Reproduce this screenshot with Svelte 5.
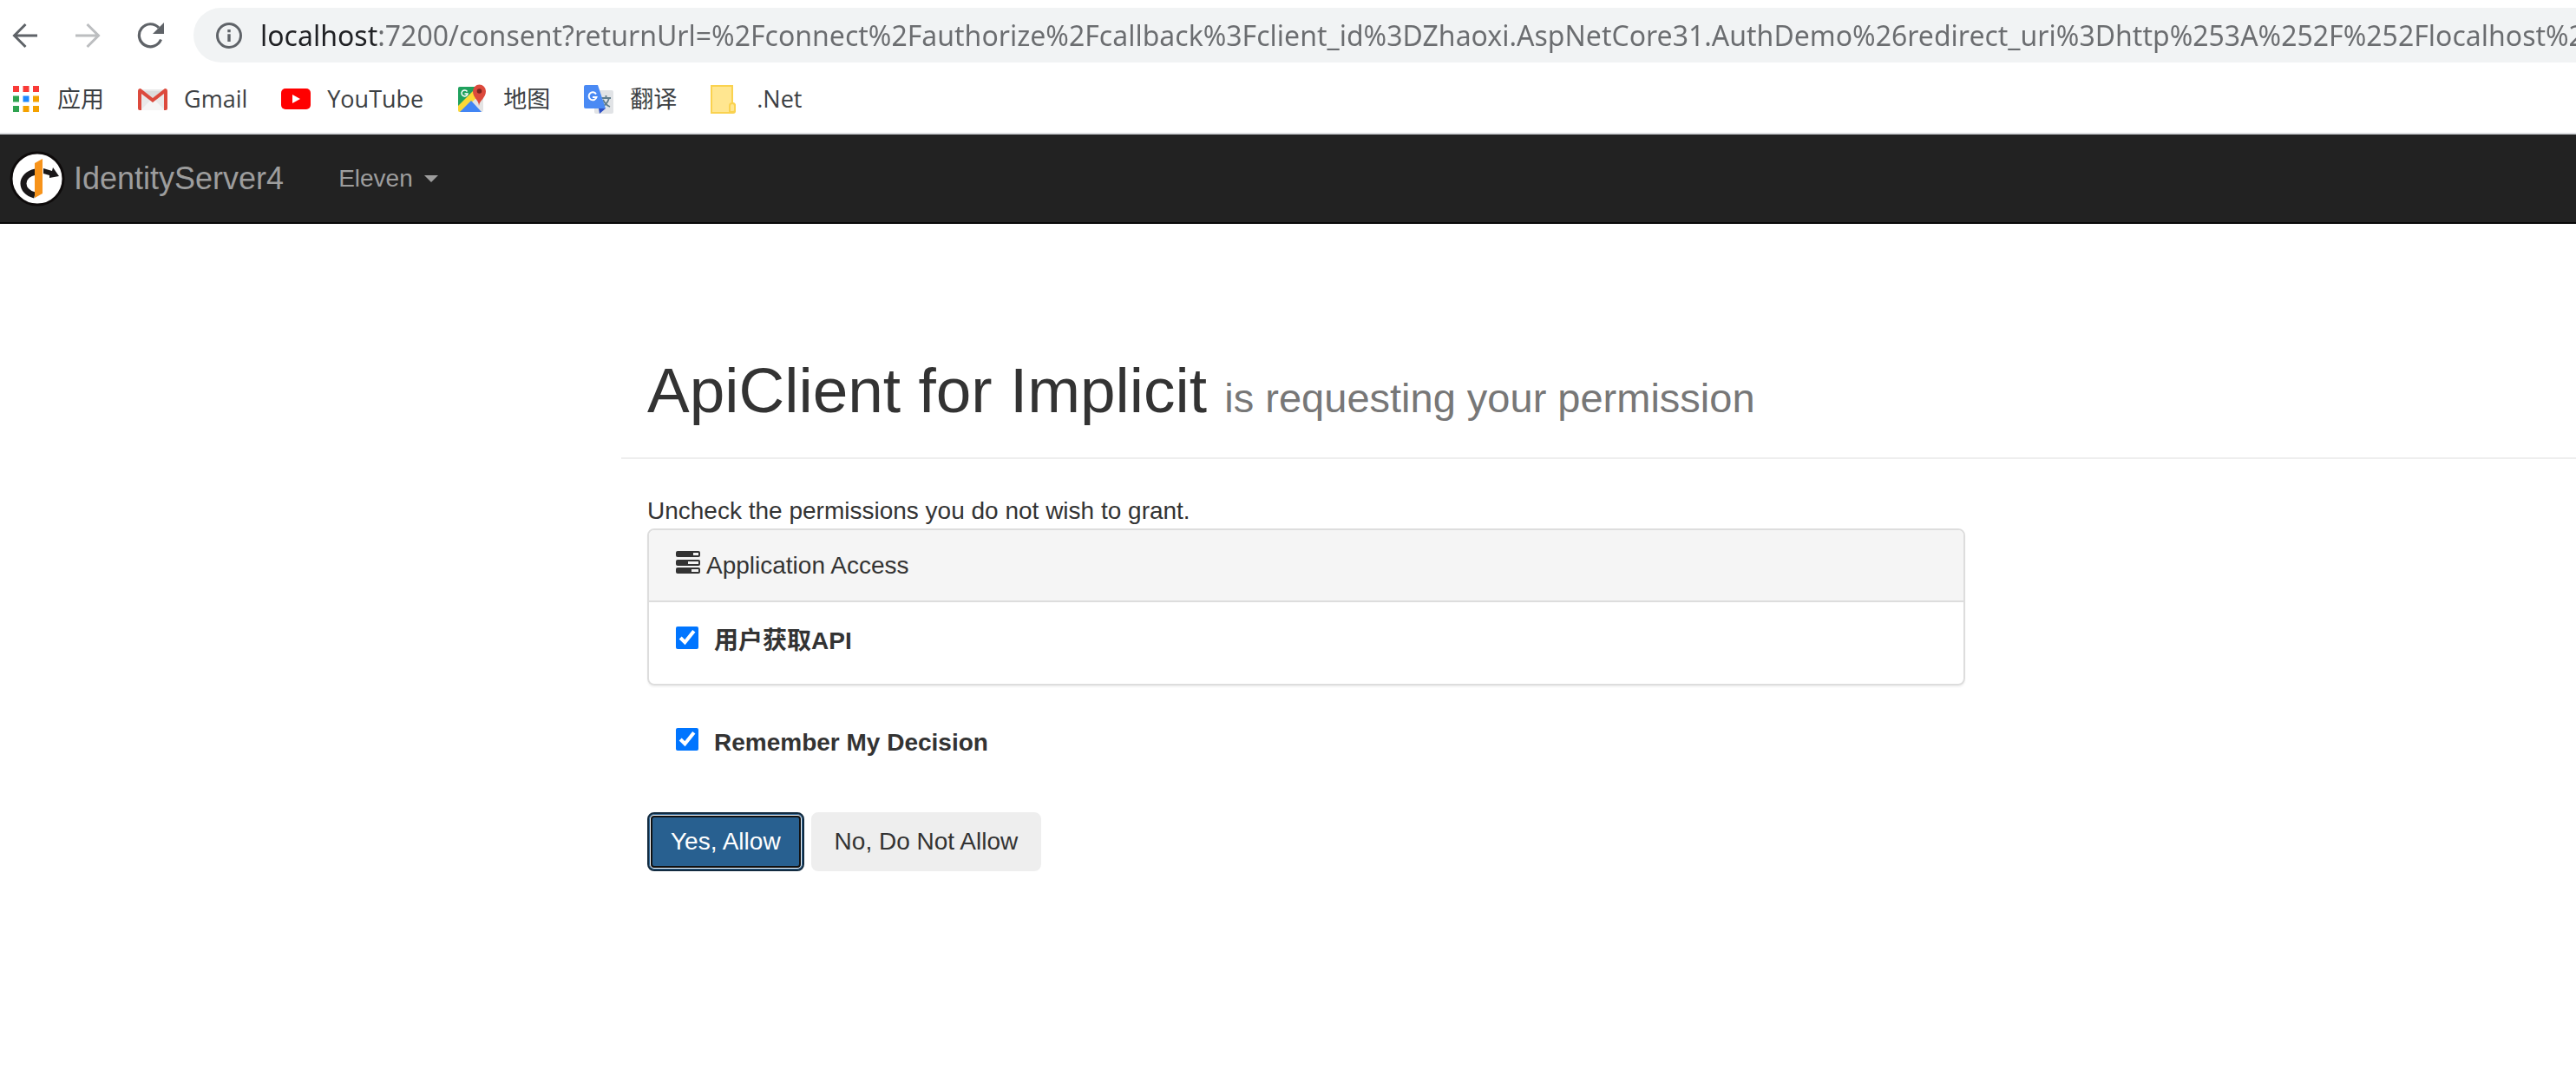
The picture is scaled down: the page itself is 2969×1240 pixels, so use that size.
<script>
  const host = 'localhost';
  const rest =
    ':7200/consent?returnUrl=%2Fconnect%2Fauthorize%2Fcallback%3Fclient_id%3DZhaoxi.AspNetCore31.AuthDemo%26redirect_uri%3Dhttp%253A%252F%252Flocalhost%253A7200';
  let address = $state(host + rest);
  let scope = $state(true);
  let remember = $state(true);
  const dots = ['#f93a37', '#f93a37', '#f93a37', '#2fa350', '#1e88ff', '#f4a100', '#2fa350', '#f4a100', '#f4a100'];
</script>

<div class="browser">
  <div class="toolbar">
    <button class="tool" aria-label="Back">
      <svg width="30" height="30" viewBox="0 0 30 30" fill="none" stroke="#5f6368" stroke-width="3"><path d="M29 15H3M15.500 2L2.500 15l13 13" /></svg>
    </button>
    <button class="tool" aria-label="Forward" disabled>
      <svg width="30" height="30" viewBox="0 0 30 30" fill="none" stroke="#bcbec0" stroke-width="3"><path d="M1 15h26M14.500 2l13 13-13 13" /></svg>
    </button>
    <button class="tool" aria-label="Reload">
      <svg width="32" height="30" viewBox="0 0 32 30"><path d="M27.500 19.500A13 13 0 1 1 25 6" fill="none" stroke="#5f6368" stroke-width="3.200" /><path d="M31 0v13H18z" fill="#5f6368" /></svg>
    </button>
    <div class="omnibox">
      <svg width="32" height="32" viewBox="0 0 32 32"><circle cx="16" cy="16" r="13.500" fill="none" stroke="#5f6368" stroke-width="3" /><path d="M14.300 9h3.400v3.200h-3.400zM14.300 14.300h3.400V23h-3.400z" fill="#5f6368" /></svg>
      <input class="address" type="text" aria-label="Address" spellcheck="false" bind:value={address} />
    </div>
  </div>

  <nav class="bookmarks" aria-label="Bookmarks">
    <a href="#apps">
      <svg width="34" height="34" viewBox="0 0 34 34">
        {#each dots as c, i}
          <rect x={2 + (i % 3) * 11.500} y={2 + Math.floor(i / 3) * 11.500} width="7" height="7" fill={c} />
        {/each}
      </svg>应用</a>
    <a href="#gmail">
      <svg width="34" height="34" viewBox="0 0 34 34"><rect x="2" y="6" width="30" height="24" rx="1" fill="#e9e9e9" /><path d="M3 30l14-14 14 14z" fill="#f5f5f5" /><path d="M3 8l14 13L31 8" fill="#dcdcdc" /><path d="M0 8q0-3 3-3l14 11L31 5q3 0 3 3v20q0 2-2 2h-2V11L17 21 4 11v19H2q-2 0-2-2z" fill="#dc4a3d" /></svg>Gmail</a>
    <a href="#youtube">
      <svg width="34" height="34" viewBox="0 0 34 34"><rect y="5" width="34" height="24" rx="5" fill="#f00" /><path d="M13 12l9 5-9 5z" fill="#fff" /></svg>YouTube</a>
    <a href="#maps">
      <svg width="34" height="34" viewBox="0 0 34 34">
        <path d="M3 3h27v27q0 2-2 2H3q-2 0-2-2V5q0-2 2-2z" fill="#e4e4e4" />
        <path d="M3 3h20l-3 10L1 29V5q0-2 2-2z" fill="#1fa15d" />
        <path d="M1 25L18 8l5 7L5 32H3q-2 0-2-2z" fill="#fdd835" />
        <path d="M3 32l13-13 12 13z" fill="#4285f4" />
        <path d="M11.500 8.500A3.500 3.500 0 1 0 12 11H8.500" fill="none" stroke="#fff" stroke-width="1.500" />
        <path d="M25 25c0-7-7-9-7-17a7 7 0 0 1 15 0c0 8-7 10-8 17z" fill="#dc4a3d" /><circle cx="25.500" cy="8" r="2.800" fill="#7b241f" />
      </svg>地图</a>
    <a href="#translate">
      <svg width="34" height="34" viewBox="0 0 34 34">
        <rect x="12" y="7" width="22" height="27" rx="2" fill="#e1e3e6" />
        <path d="M17 28h8l-7 6z" fill="#2f50c4" />
        <path d="M20 16h11M25.500 13v3M29 16q-2 7-8 10M22 18q3 6 8 8" fill="none" stroke="#607d8b" stroke-width="1.800" />
        <path d="M2 1h14l9 27H2q-2 0-2-2V3q0-2 2-2z" fill="#4a8af4" />
        <path d="M14 11.500A4.500 4.500 0 1 0 14.500 15H10" fill="none" stroke="#fff" stroke-width="2" />
      </svg>翻译</a>
    <a href="#net">
      <svg width="34" height="34" viewBox="0 0 34 34"><path d="M1 2h24v20q3 0 3 3v6q0 2-2 2H1z" fill="#ffe690" stroke="#fad24f" stroke-width="2" /><path d="M22 32v-7q0-3 3-3t3 3v5q0 2-2 2z" fill="#ffe690" stroke="#fad24f" stroke-width="2" /></svg>.Net</a>
  </nav>
</div>

<header class="navbar">
  <a class="brand" href="#home">
    <svg width="64" height="64" viewBox="0 0 64 64">
      <circle cx="32" cy="32" r="30" fill="#fff" stroke="#0e0b0b" stroke-width="3" />
      <path d="M30 24c-19 4-18 23-1 27" fill="none" stroke="#1a1718" stroke-width="7" />
      <path d="M39 20l10 3 1-4 7 10-11 2v-3l-7-2z" fill="#1a1718" />
      <path d="M29 14l9-5v40l-9 5z" fill="#f7931a" />
    </svg>IdentityServer4</a>
  <button class="user">Eleven <span class="caret"></span></button>
</header>

<main>
  <div class="container">
    <div class="page-header">
      <h1>ApiClient for Implicit <small>is requesting your permission</small></h1>
    </div>
    <form onsubmit={(e) => e.preventDefault()}>
      <p>Uncheck the permissions you do not wish to grant.</p>
      <section class="panel">
        <div class="panel-heading">
          <svg width="28" height="26" viewBox="0 0 28 26">
            {#each [[20, 0], [14, 10], [18, 19]] as [x, y]}
              <rect {y} width="28" height="7" rx="2" fill="#333" /><rect {x} y={y + 2} width={26 - x} height="3" fill="#f5f5f5" />
            {/each}
          </svg>
          Application Access
        </div>
        <div class="panel-body">
          <label><input type="checkbox" bind:checked={scope} /><strong>用户获取API</strong></label>
        </div>
      </section>
      <div class="remember">
        <label><input type="checkbox" bind:checked={remember} /><strong>Remember My Decision</strong></label>
      </div>
      <div class="actions">
        <button class="btn primary" type="submit">Yes, Allow</button>
        <button class="btn" type="button">No, Do Not Allow</button>
      </div>
    </form>
  </div>
</main>

<style>
  :global(body) {
    margin: 0;
    overflow-x: hidden;
    background: #fff;
    color: #333;
    font: 28px/40px 'Liberation Sans', 'Noto Sans CJK SC', sans-serif;
  }
  svg {
    display: block;
    flex: none;
  }
  button {
    font: inherit;
    cursor: pointer;
  }
  a {
    text-decoration: none;
  }
  .browser {
    border-bottom: 2px solid #dadce0;
    font-family: 'Open Sans', 'Noto Sans CJK SC', sans-serif;
  }
  .toolbar {
    display: flex;
    align-items: center;
    gap: 42px;
    padding: 9px 0 0 14px;
  }
  .tool {
    display: flex;
    padding: 0;
    border: 0;
    background: none;
  }
  .omnibox {
    flex: 1;
    min-width: 0;
    display: flex;
    align-items: center;
    gap: 20px;
    height: 63px;
    margin-left: -9px;
    padding-left: 25px;
    border-radius: 32px 0 0 32px;
    background: #f1f3f4;
  }
  .address {
    flex: 1;
    min-width: 0;
    height: 48px;
    padding: 0;
    border: 0;
    outline: 0;
    font: 32px/48px 'Noto Sans', sans-serif;
    color: transparent;
    background: linear-gradient(90deg, #202124 136px, #6b6d70 136px);
    -webkit-background-clip: text;
    background-clip: text;
  }
  .bookmarks {
    display: flex;
    gap: 39px;
    padding: 21px 13px 18px;
    font-size: 27px;
    line-height: 42px;
  }
  .bookmarks a {
    display: flex;
    align-items: center;
    gap: 19px;
    color: #3c4043;
  }
  .navbar {
    display: flex;
    align-items: center;
    height: 101px;
    padding-left: 11px;
    background: #222;
    border-bottom: 2px solid #080808;
  }
  .brand {
    display: flex;
    align-items: center;
    gap: 10px;
    font-size: 36px;
    color: #9d9d9d;
  }
  .user {
    display: flex;
    align-items: center;
    gap: 13px;
    margin-left: 63px;
    padding: 0;
    border: 0;
    background: none;
    color: #9d9d9d;
  }
  .caret {
    border: 8px solid transparent;
    border-top-color: #9d9d9d;
    border-bottom: 0;
  }
  main {
    display: grid;
    grid-template-columns: 716fr 2253fr;
    padding: 152px 0 120px;
  }
  .container {
    grid-column: 2;
    min-width: 0;
  }
  .page-header {
    padding: 0 30px 38px;
    border-bottom: 2px solid #eee;
  }
  h1 {
    margin: 0;
    font-size: 73px;
    font-weight: 400;
    line-height: 79px;
  }
  small {
    font-size: 47px;
    line-height: 47px;
    color: #777;
  }
  form {
    box-sizing: border-box;
    width: 70%;
    padding: 40px 28px 0 30px;
  }
  p {
    margin: 0;
  }
  .panel {
    border: 2px solid #ddd;
    border-radius: 8px;
    box-shadow: 0 2px 2px rgba(0, 0, 0, 0.05);
  }
  .panel-heading {
    display: flex;
    align-items: center;
    gap: 7px;
    padding: 21px 31px 20px;
    border-bottom: 2px solid #ddd;
    border-radius: 6px 6px 0 0;
    background: #f5f5f5;
  }
  .panel-heading svg {
    margin-bottom: 8px;
  }
  .panel-body {
    padding: 25px 31px 29px;
  }
  label {
    display: inline-flex;
    align-items: flex-start;
    gap: 18px;
  }
  input[type='checkbox'] {
    width: 26px;
    height: 26px;
    margin: 3px 0 0;
    accent-color: #0075ff;
  }
  .panel-body label {
    display: flex;
  }
  .remember {
    display: flex;
    padding: 46px 33px 60px;
  }
  .actions {
    display: flex;
    gap: 8px;
  }
  .btn {
    padding: 12px 25px;
    border: 2px solid #eee;
    border-radius: 8px;
    background: #eee;
    color: #333;
  }
  .primary {
    border-color: #122b40;
    background: #286090;
    color: #fff;
    box-shadow:
      inset 0 0 0 1px #286090,
      inset 0 0 0 2px #fff,
      inset 0 0 0 4px #101010;
  }
</style>
